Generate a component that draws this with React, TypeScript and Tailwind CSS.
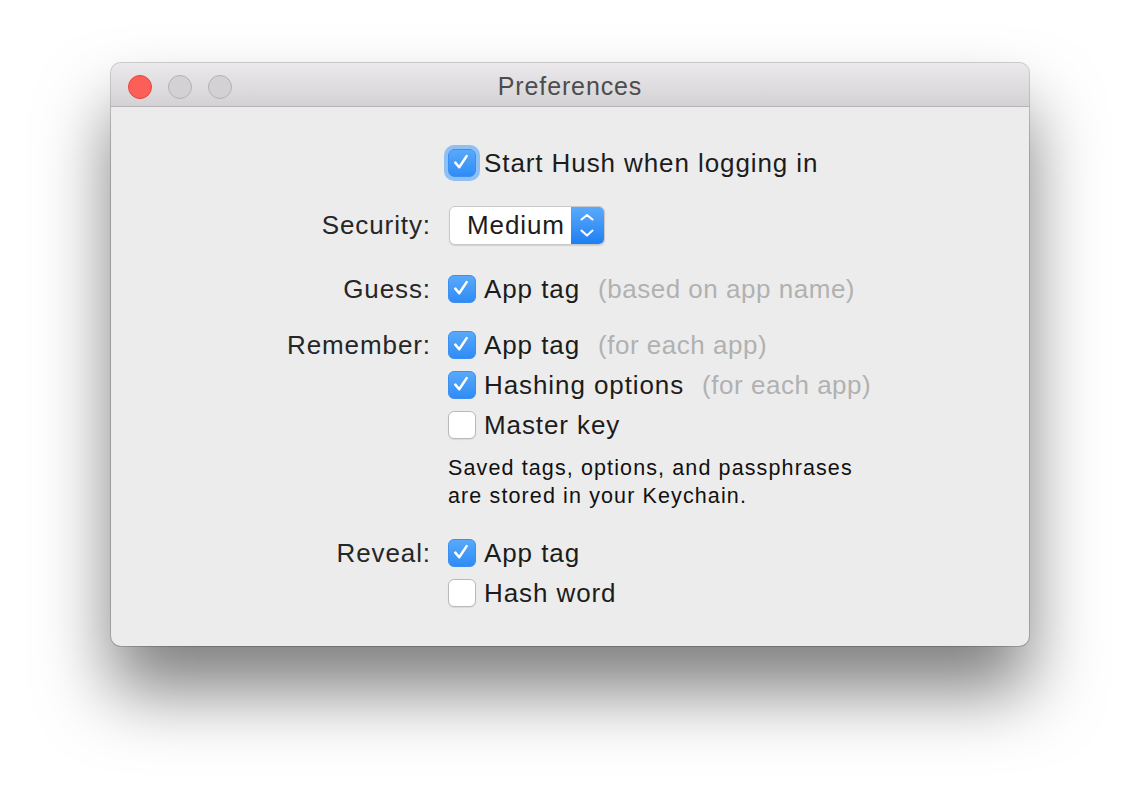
import React from 'react';

const font = { fontFamily: '"Liberation Sans", Arial, sans-serif' };

function Check({ checked, focus }: { checked: boolean; focus?: boolean }) {
  return (
    <div
      className={
        'relative w-[28px] h-[28px] shrink-0 rounded-[6px] ' +
        (checked
          ? 'bg-gradient-to-b from-[#58a9fb] to-[#2f8cf5] border border-[#3a8ff0]'
          : 'bg-white border border-[#b9b9b9] shadow-[0_1px_1px_rgba(0,0,0,0.08)]') +
        (focus ? ' ring-[4px] ring-[#8ec0f5]' : '')
      }
    >
      {checked && (
        <svg viewBox="0 0 28 28" className="absolute inset-0 w-full h-full">
          <path d="M6.8 13.6 L11 18.6 L19 6.6" fill="none" stroke="white" strokeWidth="2.7" strokeLinecap="round" strokeLinejoin="round" />
        </svg>
      )}
    </div>
  );
}

function Row({
  label,
  text,
  hint,
  checked,
  focus,
  className = '',
}: {
  label?: string;
  text: string;
  hint?: string;
  checked: boolean;
  focus?: boolean;
  className?: string;
}) {
  return (
    <div className={'flex items-center h-[40px] ' + className}>
      <div className="w-[320px] text-right text-[26px] tracking-[0.035em] text-[#262626]">{label}</div>
      <div className="pl-[17px] flex items-center">
        <Check checked={checked} focus={focus} />
        <span className="ml-[8px] text-[26px] tracking-[0.035em] text-[#1c1c1c]">{text}</span>
        {hint && <span className="ml-[18px] text-[26px] tracking-[0.02em] text-[#b1b1b1]">{hint}</span>}
      </div>
    </div>
  );
}

export default function App() {
  return (
    <div className="min-h-screen bg-white pt-[63px] pl-[111px]" style={font}>
      <div className="w-[918px] h-[583px] rounded-[10px] overflow-hidden bg-[#ececec] shadow-[0_45px_70px_rgba(0,0,0,0.5),0_0_0_1px_rgba(0,0,0,0.18)] flex flex-col">
        {/* Title bar */}
        <div className="relative h-[44px] shrink-0 bg-gradient-to-b from-[#ebe9eb] to-[#d4d2d4] border-b border-[#b4b4b4] flex items-center justify-center pt-[5px]">
          <div className="absolute left-[17px] top-[12px] flex gap-[16px]">
            <div className="w-[24px] h-[24px] rounded-full bg-[#fc5f57] border border-[#e2463f]" />
            <div className="w-[24px] h-[24px] rounded-full bg-[#d3d1d3] border border-[#b3b1b3]" />
            <div className="w-[24px] h-[24px] rounded-full bg-[#d3d1d3] border border-[#b3b1b3]" />
          </div>
          <span className="text-[25px] tracking-[0.035em] text-[#4d4d4d]">Preferences</span>
        </div>

        {/* Body */}
        <div className="flex flex-col pt-[36px]">
          <Row text="Start Hush when logging in" checked focus />

          <div className="flex items-center h-[40px] mt-[22px]">
            <div className="w-[320px] text-right text-[26px] tracking-[0.035em] text-[#262626]">Security:</div>
            <div className="ml-[18px] flex w-[156px] h-[39px] rounded-[6px] bg-white border border-[#c9c9c9] shadow-[0_1px_1px_rgba(0,0,0,0.12)] overflow-hidden">
              <div className="flex-1 flex items-center pl-[17px] text-[26px] tracking-[0.035em] text-[#1c1c1c]">Medium</div>
              <div className="w-[33px] bg-gradient-to-b from-[#5aaafb] to-[#1b7ff2] flex items-center justify-center">
                <svg viewBox="0 0 33 39" className="w-[33px] h-[39px]">
                  <path d="M10.5 13.5 L16 9 L21.5 13.5" fill="none" stroke="white" strokeWidth="2.1" strokeLinecap="round" strokeLinejoin="round" />
                  <path d="M10.5 24.5 L16 29.5 L21.5 24.5" fill="none" stroke="white" strokeWidth="2.1" strokeLinecap="round" strokeLinejoin="round" />
                </svg>
              </div>
            </div>
          </div>

          <Row className="mt-[24px]" label="Guess:" text="App tag" hint="(based on app name)" checked />

          <Row className="mt-[16px]" label="Remember:" text="App tag" hint="(for each app)" checked />
          <Row text="Hashing options" hint="(for each app)" checked />
          <Row text="Master key" checked={false} />

          <div className="mt-[9px] pl-[337px] text-[21.5px] leading-[28px] tracking-[0.052em] text-[#111]">
            Saved tags, options, and passphrases
            <br />
            are stored in your Keychain.
          </div>

          <Row className="mt-[23px]" label="Reveal:" text="App tag" checked />
          <Row text="Hash word" checked={false} />
        </div>
      </div>
    </div>
  );
}
